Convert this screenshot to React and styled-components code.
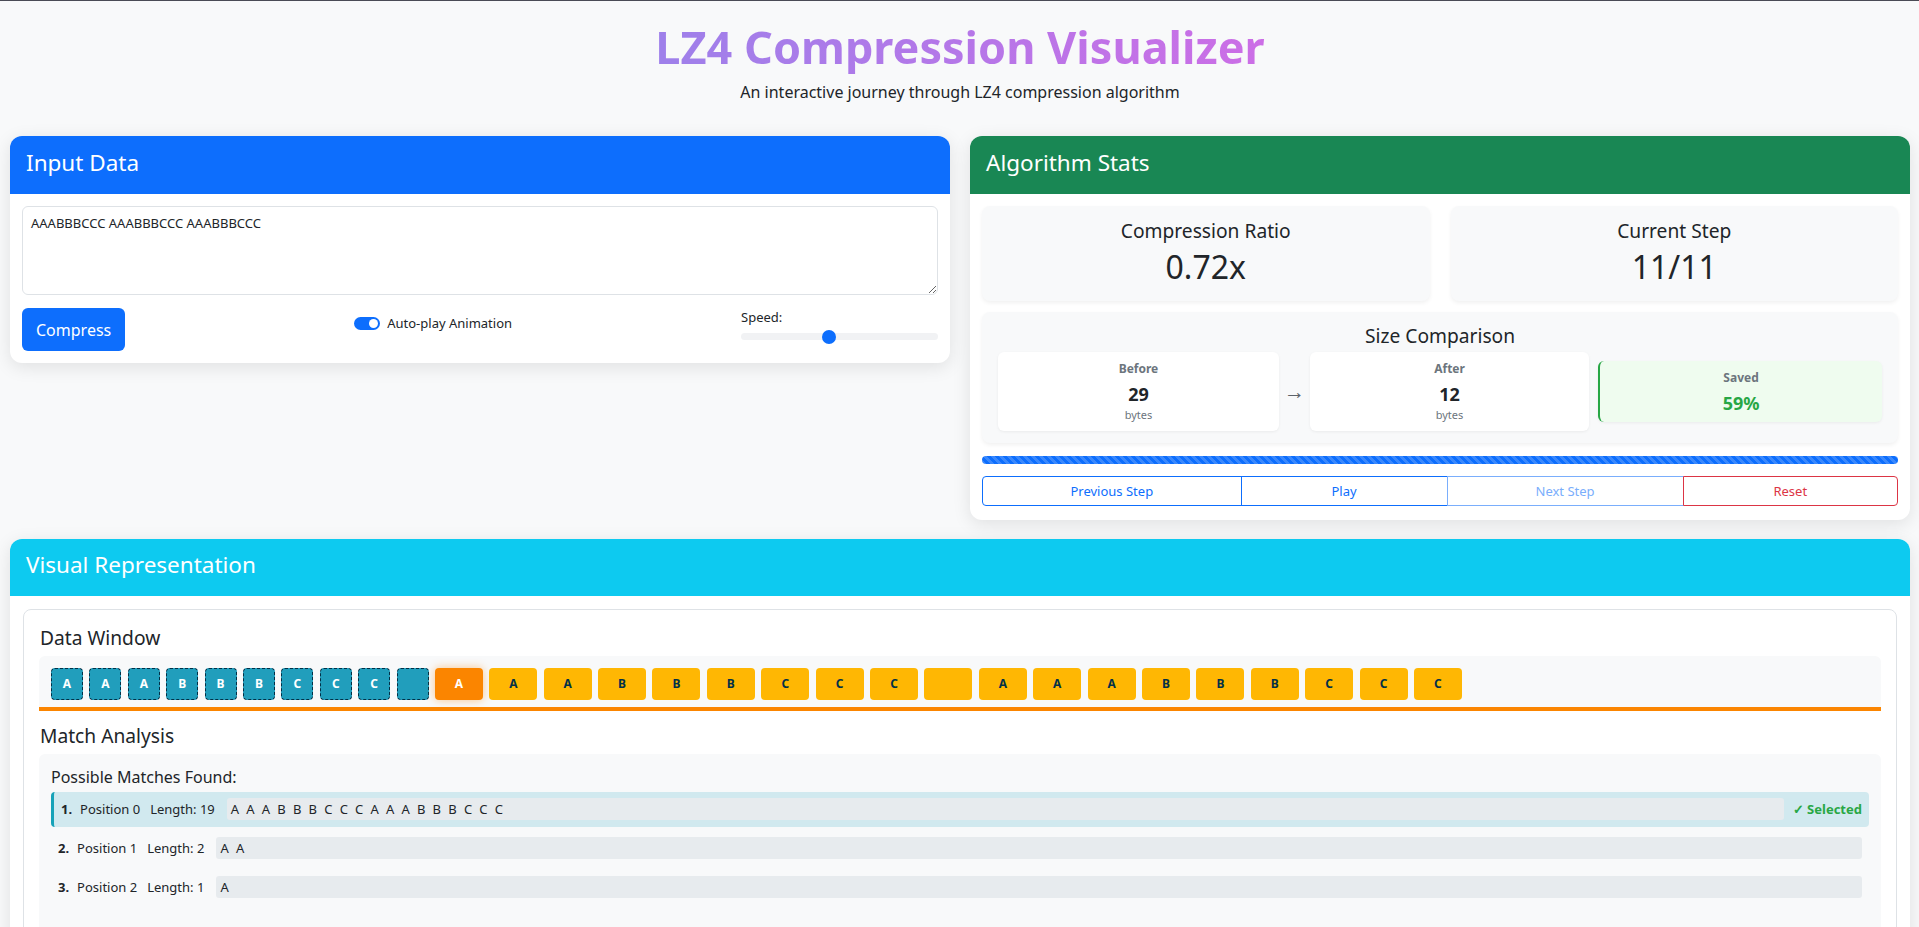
import React, {useState} from 'react'
import styled, {createGlobalStyle, css} from 'styled-components'

const GlobalStyle = createGlobalStyle`
  * { box-sizing: border-box; }
  body {
    margin: 0;
    background: #f8f9fa;
    border-top: 1px solid #4a4b55;
    font-family: "Noto Sans", "Liberation Sans", sans-serif;
    color: #212529;
  }
`

const Page = styled.div`
  padding: 0 9px 40px 10px;
`

const Hero = styled.header`
  text-align: center;
  padding-top: 19px;
  margin-bottom: 32px;
`

const Title = styled.h1`
  margin: 0;
  font-size: 45px;
  line-height: 54px;
  font-weight: 700;
  background: linear-gradient(90deg, #9e80ea, #cc6ee6);
  -webkit-background-clip: text;
  background-clip: text;
  color: transparent;
  display: inline-block;
`

const Subtitle = styled.p`
  margin: 6px 0 0;
  font-size: 16px;
  line-height: 24px;
`

const TopRow = styled.div`
  display: grid;
  grid-template-columns: 1fr 1fr;
  gap: 20px;
  align-items: start;
  margin-bottom: 19px;
`

const Card = styled.section`
  background: #fff;
  border-radius: 12px;
  overflow: hidden;
  box-shadow: 0 4px 18px rgba(0, 0, 0, 0.1);
`

const CardHeader = styled.div`
  height: ${p => p.$h || 58}px;
  display: flex;
  align-items: center;
  padding: 0 16px 6px;
  background: ${p => p.$bg};
  color: #fff;
  font-size: 22.5px;
  font-weight: 400;
`

const CardBody = styled.div`
  padding: ${p => p.$pad || '12px'};
`

const TextArea = styled.textarea`
  display: block;
  width: 100%;
  height: 89px;
  border: 1px solid #dee2e6;
  border-radius: 6px;
  padding: 7px 8px;
  font-family: inherit;
  font-size: 13px;
  line-height: 1.5;
  color: #212529;
  resize: vertical;
  outline: none;
`

const Controls = styled.div`
  display: flex;
  justify-content: space-between;
  align-items: flex-start;
  margin-top: 13px;
`

const PrimaryButton = styled.button`
  height: 43px;
  padding: 0 14px;
  border: none;
  border-radius: 6px;
  background: #0d6efd;
  color: #fff;
  font-family: inherit;
  font-size: 16px;
  cursor: pointer;
`

const SwitchLabel = styled.label`
  display: flex;
  align-items: center;
  gap: 7px;
  margin-top: 6px;
  font-size: 13px;
  line-height: 19.5px;
  cursor: pointer;
`

const SwitchTrack = styled.span`
  position: relative;
  width: 26px;
  height: 13px;
  border-radius: 7px;
  background: ${p => (p.$on ? '#0d6efd' : '#dee2e6')};
  &::after {
    content: '';
    position: absolute;
    top: 2px;
    left: ${p => (p.$on ? '15px' : '2px')};
    width: 9px;
    height: 9px;
    border-radius: 50%;
    background: #fff;
  }
`

const SpeedGroup = styled.div`
  width: 197px;
  font-size: 13px;
  line-height: 19.5px;
`

const thumb = css`
  width: 14px;
  height: 14px;
  border-radius: 50%;
  background: #0d6efd;
  border: none;
`

const Range = styled.input`
  -webkit-appearance: none;
  appearance: none;
  display: block;
  width: 100%;
  height: 16px;
  margin: 1px 0 0;
  background: transparent;
  &::-webkit-slider-runnable-track {
    height: 7px;
    border-radius: 4px;
    background: #f1f2f4;
  }
  &::-webkit-slider-thumb {
    -webkit-appearance: none;
    ${thumb};
    margin-top: -3.5px;
  }
  &::-moz-range-thumb {
    ${thumb};
  }
`

const StatGrid = styled.div`
  display: grid;
  grid-template-columns: 1fr 1fr;
  gap: 21px;
`

const StatBox = styled.div`
  background: #f8f9fa;
  border-radius: 8px;
  box-shadow: 0 2px 4px rgba(0, 0, 0, 0.06);
  text-align: center;
  padding: 13px 14px 15px;
`

const StatLabel = styled.div`
  font-size: 19.2px;
  line-height: 23px;
`

const StatValue = styled.div`
  margin-top: 6px;
  font-size: 32px;
  line-height: 38px;
`

const SizeBox = styled(StatBox)`
  margin-top: 11px;
  padding: 12px 16px;
`

const SizeRow = styled.div`
  display: flex;
  align-items: center;
  margin-top: 5px;
`

const SizeItem = styled.div`
  flex: ${p => p.$w} 1 0;
  background: ${p => (p.$saved ? '#effcef' : '#fff')};
  border-left: ${p => (p.$saved ? '2px solid #28a745' : 'none')};
  margin-left: ${p => (p.$saved ? '9px' : '0')};
  border-radius: 6px;
  box-shadow: 0 1px 3px rgba(0, 0, 0, 0.06);
  padding: 8px;
`

const ItemLabel = styled.div`
  font-size: 12px;
  line-height: 18px;
  font-weight: 700;
  color: #6c757d;
`

const ItemValue = styled.div`
  margin-top: 6px;
  font-size: 18px;
  line-height: 21.6px;
  font-weight: 700;
  color: ${p => p.$color || '#212529'};
`

const ItemUnit = styled.div`
  margin-top: 1.5px;
  font-size: 11px;
  line-height: 16px;
  color: #6c757d;
`

const Arrow = styled.div`
  width: 31px;
  text-align: center;
  font-size: 21px;
  line-height: 1;
  color: #5c636a;
`

const Progress = styled.div`
  margin-top: 13px;
  height: 8px;
  border-radius: 4px;
  background-color: #0d6efd;
  background-image: linear-gradient(
    45deg,
    rgba(255, 255, 255, 0.18) 25%,
    transparent 25%,
    transparent 50%,
    rgba(255, 255, 255, 0.18) 50%,
    rgba(255, 255, 255, 0.18) 75%,
    transparent 75%,
    transparent
  );
  background-size: 8px 8px;
`

const ButtonGroup = styled.div`
  display: flex;
  margin-top: 12px;
  margin-bottom: 2px;
`

const StepButton = styled.button`
  flex: ${p => p.$w} 1 0;
  height: 30px;
  margin-left: -1px;
  background: #fff;
  border: 1px solid ${p => p.$color};
  color: ${p => p.$color};
  font-family: inherit;
  font-size: 13px;
  cursor: pointer;
  &:first-child { margin-left: 0; border-radius: 4px 0 0 4px; }
  &:last-child { border-radius: 0 4px 4px 0; }
  &:disabled { cursor: default; }
`

const Panel = styled.div`
  border: 1px solid #dee2e6;
  border-radius: 8px;
  padding: 16px 15px 40px;
`

const SectionTitle = styled.h5`
  margin: 0 0 6.5px 1px;
  font-size: 19.2px;
  line-height: 23px;
  font-weight: 400;
`

const Strip = styled.div`
  display: flex;
  gap: 6.4px;
  padding: 12px 12px 7px;
  background: #f8f9fa;
  border-radius: 6px 6px 0 0;
  border-bottom: 4px solid #fb8500;
  margin-bottom: 13.5px;
`

const tileStyles = {
  done: css`
    width: 32px;
    background: #219ebc;
    color: #fff;
    border: 1px dashed #023047;
  `,
  current: css`
    width: 48px;
    background: #fb8500;
    color: #fff;
    box-shadow: 0 0 10px rgba(251, 133, 0, 0.45);
  `,
  pending: css`
    width: 48px;
    background: #ffb703;
    color: #023047;
  `,
}

const Tile = styled.div`
  height: 32px;
  flex: none;
  display: flex;
  align-items: center;
  justify-content: center;
  border-radius: 4px;
  font-size: 12px;
  font-weight: 700;
  ${p => tileStyles[p.$state]};
`

const MatchBox = styled.div`
  background: #f8f9fa;
  border-radius: 6px;
  padding: 11px 12px 60px;
`

const MatchHeading = styled.div`
  font-size: 16px;
  line-height: 24px;
  margin-bottom: 3px;
`

const MatchRow = styled.div`
  display: flex;
  align-items: center;
  height: 35px;
  margin-bottom: 4px;
  padding: 0 7px;
  font-size: 13px;
  border-radius: 4px;
  ${p => p.$selected && css`
    background: #d1e9ef;
    border-left: 3px solid #17a2b8;
  `}
`

const MatchNum = styled.strong`
  margin-right: 8px;
`

const MatchMeta = styled.span`
  margin-right: ${p => p.$gap}px;
`

const Sequence = styled.div`
  flex: 1;
  height: 22px;
  display: flex;
  align-items: center;
  padding: 0 4px;
  background: #e7ebee;
  border-radius: 3px;
  span { margin-right: 7.2px; }
`

const Selected = styled.span`
  margin-left: 9px;
  color: #28a745;
  font-weight: 700;
`

const INPUT = 'AAABBBCCC AAABBBCCC AAABBBCCC'
const CURRENT = 10

const MATCHES = [
  {pos: 0, len: 19, selected: true},
  {pos: 1, len: 2},
  {pos: 2, len: 1},
]

const App = () => {
  const [text, setText] = useState(INPUT)
  const [autoPlay, setAutoPlay] = useState(true)
  const [speed, setSpeed] = useState(500)

  const tileState = i => (i < CURRENT ? 'done' : i === CURRENT ? 'current' : 'pending')

  return (
    <Page>
      <GlobalStyle />
      <Hero>
        <Title>LZ4 Compression Visualizer</Title>
        <Subtitle>An interactive journey through LZ4 compression algorithm</Subtitle>
      </Hero>

      <TopRow>
        <Card>
          <CardHeader $bg="#0d6efd">Input Data</CardHeader>
          <CardBody>
            <TextArea value={text} onChange={e => setText(e.target.value)} />
            <Controls>
              <PrimaryButton>Compress</PrimaryButton>
              <SwitchLabel onClick={() => setAutoPlay(!autoPlay)}>
                <SwitchTrack $on={autoPlay} />
                Auto-play Animation
              </SwitchLabel>
              <SpeedGroup>
                Speed:
                <Range type="range" min="100" max="1000" value={speed} onChange={e => setSpeed(e.target.value)} />
              </SpeedGroup>
            </Controls>
          </CardBody>
        </Card>

        <Card>
          <CardHeader $bg="#198754">Algorithm Stats</CardHeader>
          <CardBody $pad="12px 12px 12px">
            <StatGrid>
              <StatBox>
                <StatLabel>Compression Ratio</StatLabel>
                <StatValue>0.72x</StatValue>
              </StatBox>
              <StatBox>
                <StatLabel>Current Step</StatLabel>
                <StatValue>11/11</StatValue>
              </StatBox>
            </StatGrid>
            <SizeBox>
              <StatLabel>Size Comparison</StatLabel>
              <SizeRow>
                <SizeItem $w={282}>
                  <ItemLabel>Before</ItemLabel>
                  <ItemValue>29</ItemValue>
                  <ItemUnit>bytes</ItemUnit>
                </SizeItem>
                <Arrow>→</Arrow>
                <SizeItem $w={280}>
                  <ItemLabel>After</ItemLabel>
                  <ItemValue>12</ItemValue>
                  <ItemUnit>bytes</ItemUnit>
                </SizeItem>
                <SizeItem $w={283} $saved>
                  <ItemLabel>Saved</ItemLabel>
                  <ItemValue $color="#28a745">59%</ItemValue>
                </SizeItem>
              </SizeRow>
            </SizeBox>
            <Progress />
            <ButtonGroup>
              <StepButton $w={261} $color="#0d6efd">Previous Step</StepButton>
              <StepButton $w={205} $color="#0d6efd">Play</StepButton>
              <StepButton $w={237} $color="#7aaefc" disabled>Next Step</StepButton>
              <StepButton $w={214} $color="#dc3545">Reset</StepButton>
            </ButtonGroup>
          </CardBody>
        </Card>
      </TopRow>

      <Card>
        <CardHeader $bg="#0dcaf0" $h={57}>Visual Representation</CardHeader>
        <CardBody $pad="13px">
          <Panel>
            <SectionTitle>Data Window</SectionTitle>
            <Strip>
              {INPUT.split('').map((ch, i) => (
                <Tile key={i} $state={tileState(i)}>{ch === ' ' ? '' : ch}</Tile>
              ))}
            </Strip>
            <SectionTitle>Match Analysis</SectionTitle>
            <MatchBox>
              <MatchHeading>Possible Matches Found:</MatchHeading>
              {MATCHES.map((m, i) => (
                <MatchRow key={m.pos} $selected={m.selected}>
                  <MatchNum>{i + 1}.</MatchNum>
                  <MatchMeta $gap={10}>Position {m.pos}</MatchMeta>
                  <MatchMeta $gap={12}>Length: {m.len}</MatchMeta>
                  <Sequence>
                    {INPUT.slice(m.pos, m.pos + m.len).replace(/ /g, '').split('').map((ch, j) => (
                      <span key={j}>{ch}</span>
                    ))}
                  </Sequence>
                  {m.selected && <Selected>✓ Selected</Selected>}
                </MatchRow>
              ))}
            </MatchBox>
          </Panel>
        </CardBody>
      </Card>
    </Page>
  )
}

export default App
